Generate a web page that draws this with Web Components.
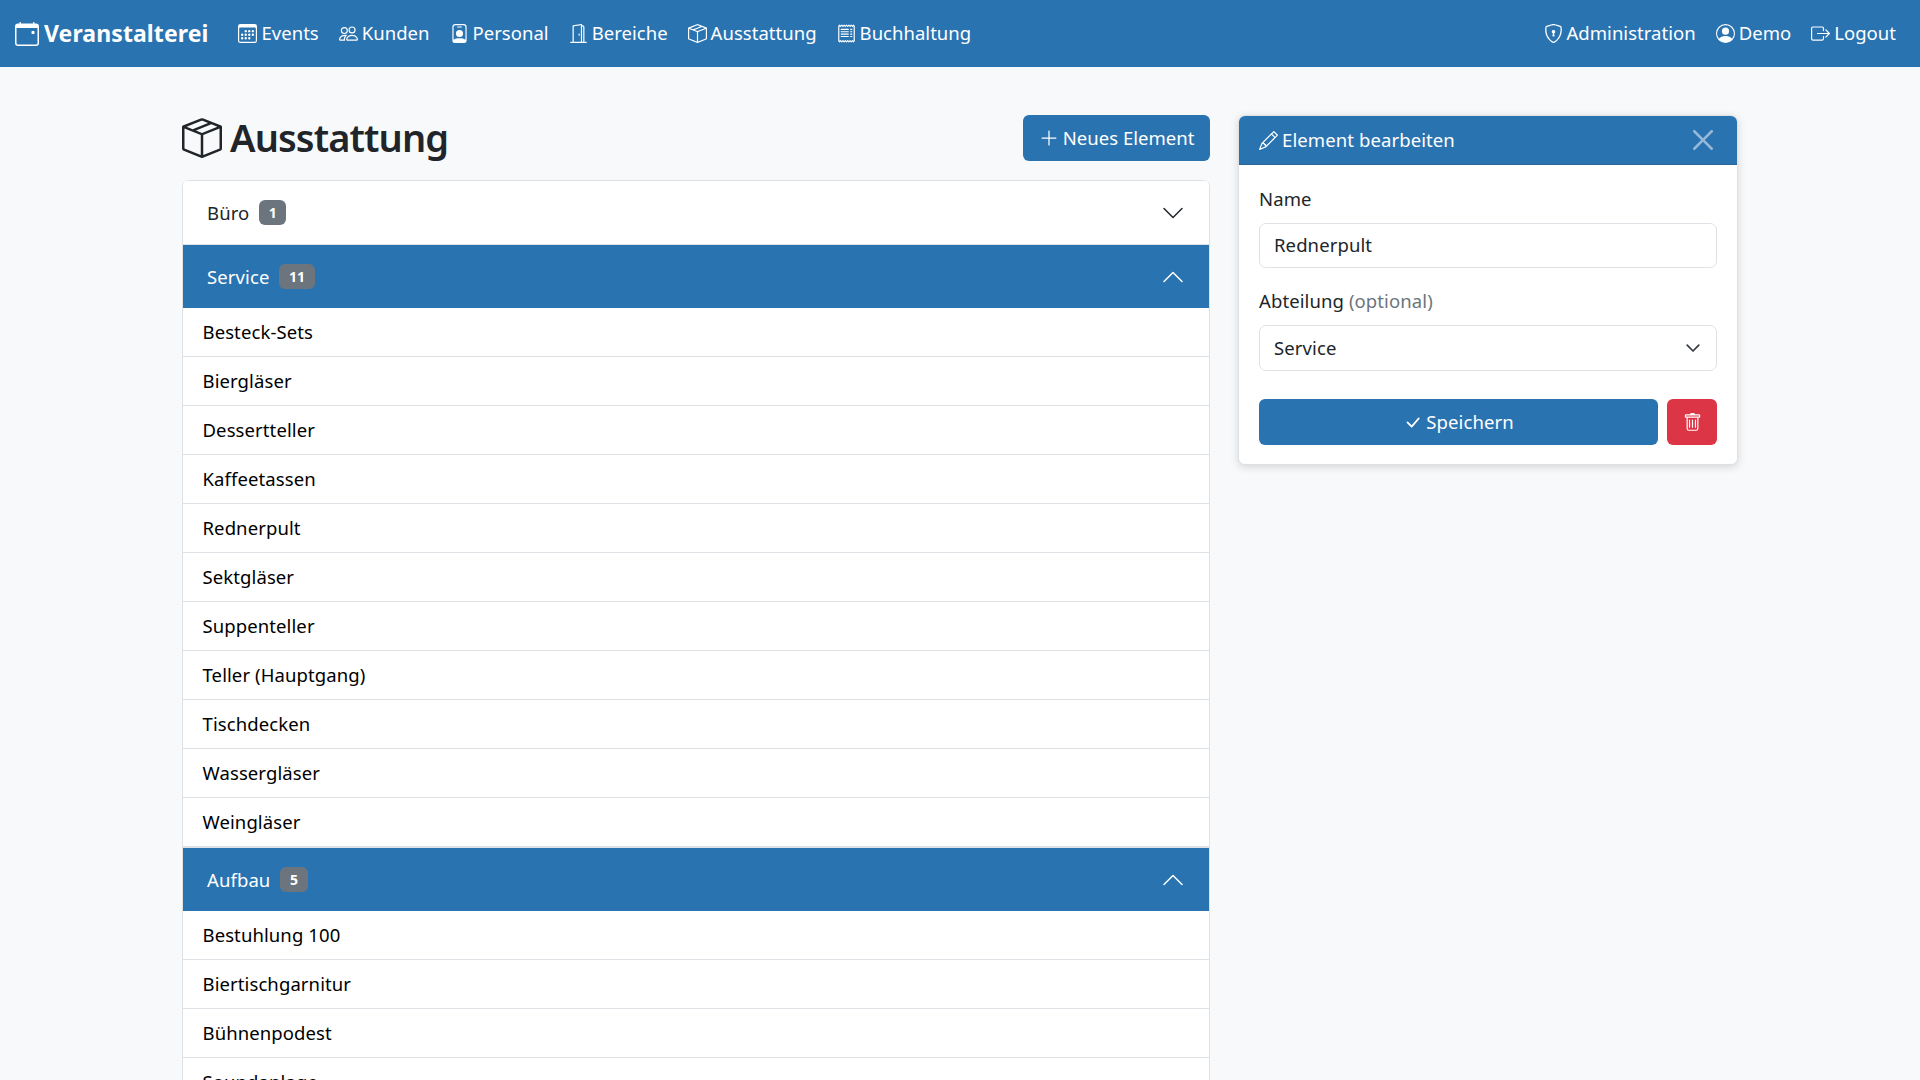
<!DOCTYPE html>
<html lang="de">
<head>
<meta charset="utf-8">
<title>Ausstattung</title>
<style>
  html, body { margin: 0; padding: 0; height: 100%; overflow: hidden; }
  body { background: #f8f9fa; color: #212529; font-family: "Noto Sans", sans-serif; font-size: 19px; letter-spacing: .1px; }
  .page { display: flex; gap: 28px; padding: 48px 182px 0 182px; align-items: flex-start; }
</style>
</head>
<body>
<script>
const ICONS = {
  calendar: '<path d="M11 6.5a.5.5 0 0 1 .5-.5h1a.5.5 0 0 1 .5.5v1a.5.5 0 0 1-.5.5h-1a.5.5 0 0 1-.5-.5v-1z"/><path d="M3.5 0a.5.5 0 0 1 .5.5V1h8V.5a.5.5 0 0 1 1 0V1h1a2 2 0 0 1 2 2v11a2 2 0 0 1-2 2H2a2 2 0 0 1-2-2V3a2 2 0 0 1 2-2h1V.5a.5.5 0 0 1 .5-.5zM1 4v10a1 1 0 0 0 1 1h12a1 1 0 0 0 1-1V4H1z"/>',
  calendar3: '<path d="M14 0H2a2 2 0 0 0-2 2v12a2 2 0 0 0 2 2h12a2 2 0 0 0 2-2V2a2 2 0 0 0-2-2zM1 3.857C1 3.384 1.448 3 2 3h12c.552 0 1 .384 1 .857v10.286c0 .473-.448.857-1 .857H2c-.552 0-1-.384-1-.857V3.857z"/><path d="M6.5 7a1 1 0 1 0 0-2 1 1 0 0 0 0 2zm3 0a1 1 0 1 0 0-2 1 1 0 0 0 0 2zm3 0a1 1 0 1 0 0-2 1 1 0 0 0 0 2zm-9 3a1 1 0 1 0 0-2 1 1 0 0 0 0 2zm3 0a1 1 0 1 0 0-2 1 1 0 0 0 0 2zm3 0a1 1 0 1 0 0-2 1 1 0 0 0 0 2zm3 0a1 1 0 1 0 0-2 1 1 0 0 0 0 2zm-9 3a1 1 0 1 0 0-2 1 1 0 0 0 0 2zm3 0a1 1 0 1 0 0-2 1 1 0 0 0 0 2zm3 0a1 1 0 1 0 0-2 1 1 0 0 0 0 2z"/>',
  people: '<path d="M15 14s1 0 1-1-1-4-5-4-5 3-5 4 1 1 1 1h8zm-7.978-1A.261.261 0 0 1 7 12.996c.001-.264.167-1.03.76-1.72C8.312 10.629 9.282 10 11 10c1.717 0 2.687.63 3.24 1.276.593.69.758 1.457.76 1.72l-.008.002a.274.274 0 0 1-.014.002H7.022zM11 7a2 2 0 1 0 0-4 2 2 0 0 0 0 4zm3-2a3 3 0 1 1-6 0 3 3 0 0 1 6 0zM6.936 9.28a5.88 5.88 0 0 0-1.23-.247A7.35 7.35 0 0 0 5 9c-4 0-5 3-5 4 0 .667.333 1 1 1h4.216A2.238 2.238 0 0 1 5 13c0-1.01.377-2.042 1.09-2.904.243-.294.526-.569.846-.816zM4.92 10A5.493 5.493 0 0 0 4 13H1c0-.26.164-1.03.76-1.724.545-.636 1.492-1.256 3.16-1.275zM1.5 5.5a3 3 0 1 1 6 0 3 3 0 0 1-6 0zm3-2a2 2 0 1 0 0 4 2 2 0 0 0 0-4z"/>',
  badge: '<path d="M6.5 2a.5.5 0 0 0 0 1h3a.5.5 0 0 0 0-1h-3zM11 8a3 3 0 1 1-6 0 3 3 0 0 1 6 0z"/><path d="M4.5 0A2.5 2.5 0 0 0 2 2.5V14a2 2 0 0 0 2 2h8a2 2 0 0 0 2-2V2.5A2.5 2.5 0 0 0 11.5 0h-7zM3 2.5A1.5 1.5 0 0 1 4.5 1h7A1.5 1.5 0 0 1 13 2.5v10.795a4.2 4.2 0 0 0-.776-.492C11.392 12.387 10.063 12 8 12s-3.392.387-4.224.803a4.2 4.2 0 0 0-.776.492V2.5z"/>',
  door: '<path d="M8.5 10c-.276 0-.5-.448-.5-1s.224-1 .5-1 .5.448.5 1-.224 1-.5 1z"/><path d="M10.828.122A.5.5 0 0 1 11 .5V1h.5A1.5 1.5 0 0 1 13 2.5V15h1.5a.5.5 0 0 1 0 1h-13a.5.5 0 0 1 0-1H3V1.5a.5.5 0 0 1 .43-.495l7-1a.5.5 0 0 1 .398.117zM11.5 2H11v13h1V2.5a.5.5 0 0 0-.5-.5zM4 1.934V15h6V1.077l-6 .857z"/>',
  box: '<path d="M8.186 1.113a.5.5 0 0 0-.372 0L1.846 3.5l2.404.961L10.404 2l-2.218-.887zm3.564 1.426L5.596 5 8 5.961 14.154 3.5l-2.404-.961zm3.25 1.7-6.5 2.6v7.922l6.5-2.6V4.24zM7.5 14.762V6.838L1 4.239v7.925l6.5 2.6zM7.443.184a1.5 1.5 0 0 1 1.114 0l7.129 2.852A.5.5 0 0 1 16 3.5v8.662a1 1 0 0 1-.629.928l-7.185 2.874a.5.5 0 0 1-.372 0L.63 13.09a1 1 0 0 1-.63-.928V3.5a.5.5 0 0 1 .314-.464L7.443.184z"/>',
  receipt: '<path d="M1.92.506a.5.5 0 0 1 .434.14L3 1.293l.646-.647a.5.5 0 0 1 .708 0L5 1.293l.646-.647a.5.5 0 0 1 .708 0L7 1.293l.646-.647a.5.5 0 0 1 .708 0L9 1.293l.646-.647a.5.5 0 0 1 .708 0l.646.647.646-.647a.5.5 0 0 1 .708 0l.646.647.646-.647a.5.5 0 0 1 .801.13l.5 1A.5.5 0 0 1 15 2v12a.5.5 0 0 1-.053.224l-.5 1a.5.5 0 0 1-.8.13L13 14.707l-.646.647a.5.5 0 0 1-.708 0L11 14.707l-.646.647a.5.5 0 0 1-.708 0L9 14.707l-.646.647a.5.5 0 0 1-.708 0L7 14.707l-.646.647a.5.5 0 0 1-.708 0L5 14.707l-.646.647a.5.5 0 0 1-.708 0L3 14.707l-.646.647a.5.5 0 0 1-.801-.13l-.5-1A.5.5 0 0 1 1 14V2a.5.5 0 0 1 .053-.224l.5-1a.5.5 0 0 1 .367-.27zm.217 1.338L2 2.118v11.764l.137.274.51-.51a.5.5 0 0 1 .707 0l.646.647.646-.646a.5.5 0 0 1 .708 0l.646.646.646-.646a.5.5 0 0 1 .708 0l.646.646.646-.646a.5.5 0 0 1 .708 0l.646.646.646-.646a.5.5 0 0 1 .708 0l.646.646.646-.646a.5.5 0 0 1 .708 0l.509.509.137-.274V2.118l-.137-.274-.51.51a.5.5 0 0 1-.707 0L12 1.707l-.646.647a.5.5 0 0 1-.708 0L10 1.707l-.646.647a.5.5 0 0 1-.708 0L8 1.707l-.646.647a.5.5 0 0 1-.708 0L6 1.707l-.646.647a.5.5 0 0 1-.708 0L4 1.707l-.646.647a.5.5 0 0 1-.708 0l-.509-.51z"/><path d="M3 4.5a.5.5 0 0 1 .5-.5h6a.5.5 0 1 1 0 1h-6a.5.5 0 0 1-.5-.5zm0 2a.5.5 0 0 1 .5-.5h6a.5.5 0 1 1 0 1h-6a.5.5 0 0 1-.5-.5zm0 2a.5.5 0 0 1 .5-.5h6a.5.5 0 1 1 0 1h-6a.5.5 0 0 1-.5-.5zm0 2a.5.5 0 0 1 .5-.5h6a.5.5 0 0 1 0 1h-6a.5.5 0 0 1-.5-.5zm8-6a.5.5 0 0 1 .5-.5h1a.5.5 0 0 1 0 1h-1a.5.5 0 0 1-.5-.5zm0 2a.5.5 0 0 1 .5-.5h1a.5.5 0 0 1 0 1h-1a.5.5 0 0 1-.5-.5zm0 2a.5.5 0 0 1 .5-.5h1a.5.5 0 0 1 0 1h-1a.5.5 0 0 1-.5-.5zm0 2a.5.5 0 0 1 .5-.5h1a.5.5 0 0 1 0 1h-1a.5.5 0 0 1-.5-.5z"/>',
  shield: '<path d="M5.338 1.59a61.44 61.44 0 0 0-2.837.856.481.481 0 0 0-.328.39c-.554 4.157.726 7.19 2.253 9.188a10.725 10.725 0 0 0 2.287 2.233c.346.244.652.42.893.533.12.057.218.095.293.118a.55.55 0 0 0 .101.025.615.615 0 0 0 .1-.025c.076-.023.174-.061.294-.118.24-.113.547-.29.893-.533a10.726 10.726 0 0 0 2.287-2.233c1.527-1.997 2.807-5.031 2.253-9.188a.48.48 0 0 0-.328-.39c-.651-.213-1.75-.56-2.837-.855C9.552 1.29 8.531 1.067 8 1.067c-.53 0-1.552.223-2.662.524zM5.072.56C6.157.265 7.31 0 8 0s1.843.265 2.928.56c1.11.3 2.229.655 2.887.87a1.54 1.54 0 0 1 1.044 1.262c.596 4.477-.787 7.795-2.465 9.99a11.775 11.775 0 0 1-2.517 2.453 7.159 7.159 0 0 1-1.048.625c-.28.132-.581.24-.829.24s-.548-.108-.829-.24a7.158 7.158 0 0 1-1.048-.625 11.777 11.777 0 0 1-2.517-2.453C1.928 10.487.545 7.169 1.141 2.692A1.54 1.54 0 0 1 2.185 1.43 62.456 62.456 0 0 1 5.072.56z"/><path d="M9.5 6.5a1.5 1.5 0 0 1-1 1.415l.385 1.99a.5.5 0 0 1-.491.595h-.788a.5.5 0 0 1-.49-.595l.384-1.99a1.5 1.5 0 1 1 2-1.415z"/>',
  person: '<path d="M11 6a3 3 0 1 1-6 0 3 3 0 0 1 6 0z"/><path fill-rule="evenodd" d="M0 8a8 8 0 1 1 16 0A8 8 0 0 1 0 8zm8-7a7 7 0 0 0-5.468 11.37C3.242 11.226 4.805 10 8 10s4.757 1.225 5.468 2.37A7 7 0 0 0 8 1z"/>',
  logout: '<path fill-rule="evenodd" d="M10 12.5a.5.5 0 0 1-.5.5h-8a.5.5 0 0 1-.5-.5v-9a.5.5 0 0 1 .5-.5h8a.5.5 0 0 1 .5.5v2a.5.5 0 0 0 1 0v-2A1.5 1.5 0 0 0 9.5 2h-8A1.5 1.5 0 0 0 0 3.5v9A1.5 1.5 0 0 0 1.5 14h8a1.5 1.5 0 0 0 1.5-1.5v-2a.5.5 0 0 0-1 0v2z"/><path fill-rule="evenodd" d="M15.854 8.354a.5.5 0 0 0 0-.708l-3-3a.5.5 0 0 0-.708.708L14.293 7.5H5.5a.5.5 0 0 0 0 1h8.793l-2.147 2.146a.5.5 0 0 0 .708.708l3-3z"/>',
  plus: '<path fill-rule="evenodd" d="M8 2a.5.5 0 0 1 .5.5v5h5a.5.5 0 0 1 0 1h-5v5a.5.5 0 0 1-1 0v-5h-5a.5.5 0 0 1 0-1h5v-5A.5.5 0 0 1 8 2z"/>',
  pencil: '<path d="M12.146.146a.5.5 0 0 1 .708 0l3 3a.5.5 0 0 1 0 .708l-10 10a.5.5 0 0 1-.168.11l-5 2a.5.5 0 0 1-.65-.65l2-5a.5.5 0 0 1 .11-.168l10-10zM11.207 2.5 13.5 4.793 14.793 3.5 12.5 1.207 11.207 2.5zm1.586 3L10.5 3.207 4 9.707V10h.5a.5.5 0 0 1 .5.5v.5h.5a.5.5 0 0 1 .5.5v.5h.293l6.5-6.5zm-9.761 5.175-.106.106-1.528 3.821 3.821-1.528.106-.106A.5.5 0 0 1 5 12.5V12h-.5a.5.5 0 0 1-.5-.5V11h-.5a.5.5 0 0 1-.468-.325z"/>',
  check: '<path d="M12.736 3.97a.733.733 0 0 1 1.047 0c.286.289.29.756.01 1.05L7.88 12.01a.733.733 0 0 1-1.065.02L3.217 8.384a.757.757 0 0 1 0-1.06.733.733 0 0 1 1.047 0l3.052 3.093 5.4-6.425a.247.247 0 0 1 .02-.022z"/>',
  trash: '<path d="M5.5 5.5A.5.5 0 0 1 6 6v6a.5.5 0 0 1-1 0V6a.5.5 0 0 1 .5-.5zm2.5 0a.5.5 0 0 1 .5.5v6a.5.5 0 0 1-1 0V6a.5.5 0 0 1 .5-.5zm3 .5a.5.5 0 0 0-1 0v6a.5.5 0 0 0 1 0V6z"/><path fill-rule="evenodd" d="M14.5 3a1 1 0 0 1-1 1H13v9a2 2 0 0 1-2 2H5a2 2 0 0 1-2-2V4h-.5a1 1 0 0 1-1-1V2a1 1 0 0 1 1-1H6a1 1 0 0 1 1-1h2a1 1 0 0 1 1 1h3.5a1 1 0 0 1 1 1v1zM4.118 4 4 4.059V13a1 1 0 0 0 1 1h6a1 1 0 0 0 1-1V4.059L11.882 4H4.118zM2.5 3V2h11v1h-11z"/>',
  down: '<path fill-rule="evenodd" d="M1.646 4.646a.5.5 0 0 1 .708 0L8 10.293l5.646-5.647a.5.5 0 0 1 .708.708l-6 6a.5.5 0 0 1-.708 0l-6-6a.5.5 0 0 1 0-.708z"/>',
  up: '<path fill-rule="evenodd" d="M1.646 11.354a.5.5 0 0 0 .708 0L8 5.707l5.646 5.647a.5.5 0 0 0 .708-.708l-6-6a.5.5 0 0 0-.708 0l-6 6a.5.5 0 0 0 0 .708z"/>',
  close: '<path d="M.293.293a1 1 0 0 1 1.414 0L8 6.586 14.293.293a1 1 0 1 1 1.414 1.414L9.414 8l6.293 6.293a1 1 0 0 1-1.414 1.414L8 9.414l-6.293 6.293a1 1 0 0 1-1.414-1.414L6.586 8 .293 1.707a1 1 0 0 1 0-1.414z"/>',
  select: '<path fill="none" stroke="currentColor" stroke-linecap="round" stroke-linejoin="round" stroke-width="1.7" d="m2.2 5.2 5.8 5.8 5.8-5.8"/>'
};

class AppIcon extends HTMLElement {
  connectedCallback() {
    const shadow = this.attachShadow({ mode: "open" });
    const size = this.getAttribute("size") || 19;
    shadow.innerHTML = `
    <style>
      :host { display: inline-flex; flex: none; }
      svg { display: block; fill: currentColor; }
    </style>
    <svg width="${size}" height="${size}" viewBox="0 0 16 16">${ICONS[this.getAttribute("name")]}</svg>`;
  }
}
customElements.define("app-icon", AppIcon);

class NavLink extends HTMLElement {
  connectedCallback() {
    const shadow = this.attachShadow({ mode: "open" });
    shadow.innerHTML = `
    <style>
      :host { display: flex; align-items: center; gap: 4px; color: #fff; font-size: 18.5px; letter-spacing: .03px; white-space: nowrap; }
      span { padding-bottom: 2px; }
    </style>
    <app-icon name="${this.getAttribute("icon")}"></app-icon><span><slot></slot></span>`;
  }
}
customElements.define("nav-link", NavLink);

class TopBar extends HTMLElement {
  connectedCallback() {
    const shadow = this.attachShadow({ mode: "open" });
    shadow.innerHTML = `
    <style>
      :host { display: flex; align-items: center; justify-content: space-between; height: 67px; padding: 0 24px 0 15px; background: #2a73b1; color: #fff; box-sizing: border-box; }
      .left, .right { display: flex; align-items: center; gap: 20px; }
      .brand { display: flex; align-items: center; gap: 5px; font-size: 23px; font-weight: 700; margin-right: 10px; }
      .brand span { padding-bottom: 2px; }
    </style>
    <div class="left">
      <div class="brand"><app-icon name="calendar" size="24"></app-icon><span>Veranstalterei</span></div>
      <nav-link icon="calendar3">Events</nav-link>
      <nav-link icon="people">Kunden</nav-link>
      <nav-link icon="badge">Personal</nav-link>
      <nav-link icon="door">Bereiche</nav-link>
      <nav-link icon="box">Ausstattung</nav-link>
      <nav-link icon="receipt">Buchhaltung</nav-link>
    </div>
    <div class="right">
      <nav-link icon="shield">Administration</nav-link>
      <nav-link icon="person">Demo</nav-link>
      <nav-link icon="logout">Logout</nav-link>
    </div>`;
  }
}
customElements.define("top-bar", TopBar);

class AccordionGroup extends HTMLElement {
  connectedCallback() {
    const shadow = this.attachShadow({ mode: "open" });
    const open = this.hasAttribute("open");
    shadow.innerHTML = `
    <style>
      :host { display: block; border-top: 1px solid #dee2e6; }
      .head { display: flex; align-items: center; height: 63px; padding: 0 24px; gap: 10px; box-sizing: border-box; background: ${open ? "#2a73b1" : "#fff"}; color: ${open ? "#fff" : "#212529"}; font-size: 18.5px; }
      .name { padding-bottom: 1px; }
      .count { background: #6c757d; color: #fff; font-size: 14px; font-weight: 700; line-height: 25px; height: 25px; padding: 0 9.5px; border-radius: 6px; }
      app-icon { margin-left: auto; }
    </style>
    <div class="head">
      <span class="name">${this.getAttribute("label")}</span><span class="count">${this.getAttribute("count")}</span>
      <app-icon name="${open ? "up" : "down"}" size="24"></app-icon>
    </div>
    <slot></slot>`;
  }
}
customElements.define("accordion-group", AccordionGroup);

class ListItem extends HTMLElement {
  connectedCallback() {
    const shadow = this.attachShadow({ mode: "open" });
    shadow.innerHTML = `
    <style>
      :host { display: flex; align-items: center; height: 49px; box-sizing: border-box; padding: 0 19.5px 2px; background: #fff; border-bottom: 1px solid #dee2e6; font-size: 18.5px; color: #000; }
    </style>
    <slot></slot>`;
  }
}
customElements.define("list-item", ListItem);

class EquipmentPanel extends HTMLElement {
  connectedCallback() {
    const shadow = this.attachShadow({ mode: "open" });
    shadow.innerHTML = `
    <style>
      :host { display: block; flex: none; width: 1028px; }
      .title-row { display: flex; align-items: center; justify-content: space-between; height: 46px; margin-bottom: 19px; }
      h2 { display: flex; align-items: center; gap: 8px; margin: 0; font-size: 38px; font-weight: 600; letter-spacing: -.9px; color: #212529; }
      h2 span { padding-bottom: 3px; }
      .new { display: flex; align-items: center; gap: 4px; height: 46px; padding: 0 15.5px; background: #2a73b1; color: #fff; border-radius: 6px; font-size: 18.5px; letter-spacing: .03px; }
      .new span { padding-bottom: 2px; }
      .card { border: 1px solid #dee2e6; border-top: 0; border-bottom: 0; border-radius: 7px 7px 0 0; overflow: hidden; background: #fff; }
    </style>
    <div class="title-row">
      <h2><app-icon name="box" size="40"></app-icon><span>Ausstattung</span></h2>
      <div class="new"><app-icon name="plus" size="20"></app-icon><span>Neues Element</span></div>
    </div>
    <div class="card"><slot></slot></div>`;
  }
}
customElements.define("equipment-panel", EquipmentPanel);

class EditPanel extends HTMLElement {
  connectedCallback() {
    const shadow = this.attachShadow({ mode: "open" });
    shadow.innerHTML = `
    <style>
      :host { display: block; flex: none; width: 500px; background: #fff; border: 1px solid #dee2e6; border-radius: 7px; box-shadow: 0 2px 8px rgba(0,0,0,.15); box-sizing: border-box; overflow: hidden; }
      .head { display: flex; align-items: center; gap: 4px; height: 49px; padding: 0 24px 0 20px; background: #2a73b1; color: #fff; font-size: 18.5px; border-bottom: 1px solid #2a6597; box-sizing: border-box; }
      .head span { padding-bottom: 1px; }
      .close { margin-left: auto; color: #95b9d8; }
      form { display: block; padding: 20px 20px 19px; }
      label { display: block; font-size: 18.5px; line-height: 28px; margin-bottom: 10px; }
      label span { color: #6c757d; }
      .field { display: flex; align-items: center; justify-content: space-between; height: 45px; box-sizing: border-box; padding: 0 15px 2px 14px; border: 1px solid #dee2e6; border-radius: 7px; font-size: 18.5px; margin-bottom: 19px; }
      .select { height: 46px; margin-bottom: 28px; color: #212529; }
      .select app-icon { color: #343a40; margin-top: 2px; }
      .actions { display: flex; gap: 9px; }
      .save { flex: 1; display: flex; align-items: center; justify-content: center; gap: 4px; height: 46px; background: #2a73b1; color: #fff; border-radius: 6px; font-size: 18.5px; }
      .save span { padding-bottom: 2px; }
      .del { display: flex; align-items: center; justify-content: center; width: 50px; height: 46px; background: #dc3545; color: #fff; border-radius: 6px; }
    </style>
    <div class="head"><app-icon name="pencil"></app-icon><span>Element bearbeiten</span><app-icon class="close" name="close" size="20"></app-icon></div>
    <form>
      <label>Name</label>
      <div class="field">Rednerpult</div>
      <label>Abteilung <span>(optional)</span></label>
      <div class="field select">Service<app-icon name="select" size="16"></app-icon></div>
      <div class="actions">
        <div class="save"><app-icon name="check"></app-icon><span>Speichern</span></div>
        <div class="del"><app-icon name="trash"></app-icon></div>
      </div>
    </form>`;
  }
}
customElements.define("edit-panel", EditPanel);
</script>
<top-bar></top-bar>
<div class="page">
  <equipment-panel>
    <accordion-group label="Büro" count="1"></accordion-group>
    <accordion-group label="Service" count="11" open>
      <list-item>Besteck-Sets</list-item>
      <list-item>Biergläser</list-item>
      <list-item>Dessertteller</list-item>
      <list-item>Kaffeetassen</list-item>
      <list-item>Rednerpult</list-item>
      <list-item>Sektgläser</list-item>
      <list-item>Suppenteller</list-item>
      <list-item>Teller (Hauptgang)</list-item>
      <list-item>Tischdecken</list-item>
      <list-item>Wassergläser</list-item>
      <list-item>Weingläser</list-item>
    </accordion-group>
    <accordion-group label="Aufbau" count="5" open>
      <list-item>Bestuhlung 100</list-item>
      <list-item>Biertischgarnitur</list-item>
      <list-item>Bühnenpodest</list-item>
      <list-item>Soundanlage</list-item>
    </accordion-group>
  </equipment-panel>
  <edit-panel></edit-panel>
</div>
</body>
</html>
